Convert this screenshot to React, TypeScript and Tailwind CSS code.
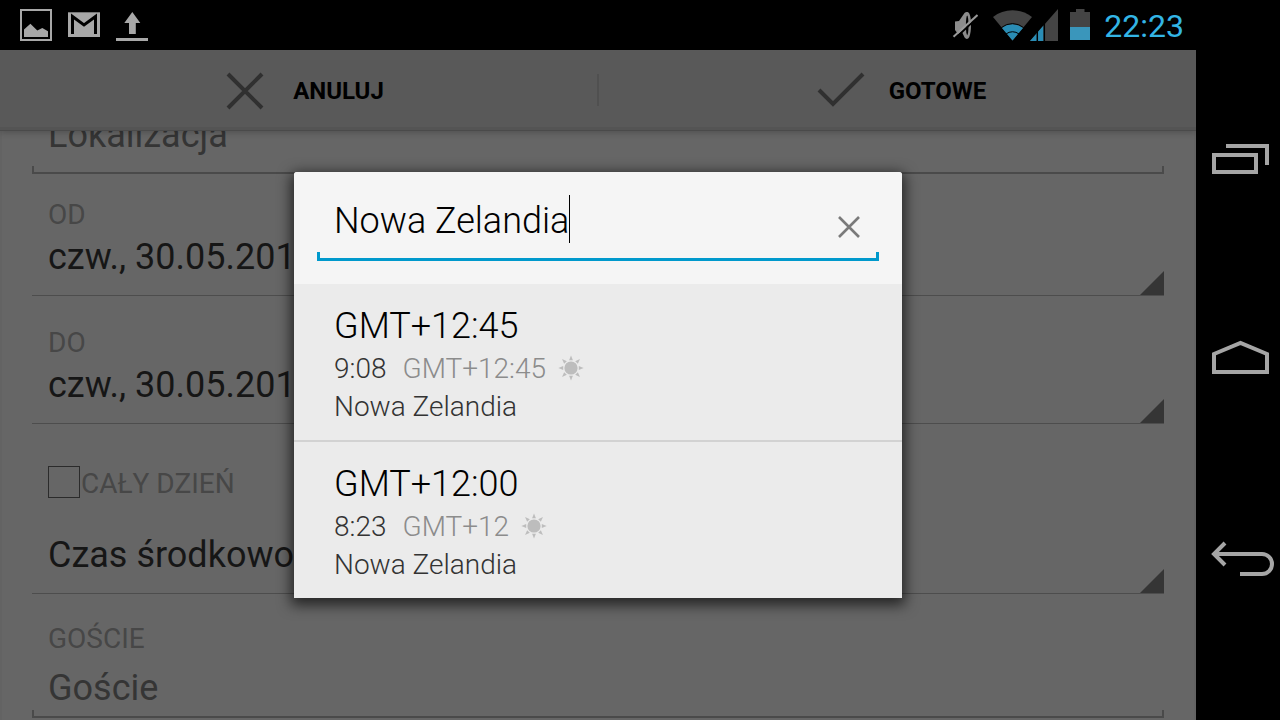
import { useState } from "react";
import type { ReactNode } from "react";

function ImageIcon() {
  return (
    <svg width="32" height="32" viewBox="0 0 32 32" fill="none" aria-hidden="true">
      <rect x="1" y="1" width="30" height="30" stroke="#a8a8a8" strokeWidth="2" />
      <path d="M4 28V20.5L10.4 14.7L17.3 21.5L22.3 19L28 22.3V28Z" fill="#a8a8a8" />
    </svg>
  );
}

function MailIcon() {
  return (
    <svg width="32" height="32" viewBox="0 0 32 32" fill="none" aria-hidden="true">
      <rect x="0" y="3.3" width="32" height="24.7" fill="#a8a8a8" />
      <path d="M4.5 25V7.5L16 16L27.5 7.5V25" stroke="#000" strokeWidth="3" />
    </svg>
  );
}

function UploadIcon() {
  return (
    <svg width="32" height="32" viewBox="0 0 32 32" fill="#a8a8a8" aria-hidden="true">
      <path d="M16.3 3L24.3 14H19.8V25H13V14H8.3Z" />
      <rect x="0" y="29" width="32" height="3" />
    </svg>
  );
}

function MuteIcon() {
  return (
    <svg width="26" height="32" viewBox="0 0 26 32" fill="none" aria-hidden="true">
      <path d="M3 12.500L7 12L12.500 4C14 2.600 16 2.600 17.300 4.500C18.600 7 19 11 19 16S18.500 25 17.300 28C16 30.500 14 30.500 12.600 28.500L10 23L6 25L3 21Z" fill="#8c8c8c" />
      <ellipse cx="15.200" cy="16.400" rx="1.300" ry="9.800" fill="#000" />
      <path d="M3 29.500L26 8" stroke="#000" strokeWidth="2" />
      <path d="M1.500 27.800L25.500 6" stroke="#9a9a9a" strokeWidth="2" />
    </svg>
  );
}

function WifiIcon() {
  return (
    <svg width="40" height="32" viewBox="0 0 40 32" aria-hidden="true">
      <path d="M20.5 31.500L1 8A32 32 0 0 1 40 8Z" fill="#444" />
      <path d="M20.5 31.500L10 19A17 17 0 0 1 31 19Z" fill="#2a8db5" />
      <path d="M9.500 18.500A17.500 17.500 0 0 1 31.500 18.500M14 25A10.500 10.500 0 0 1 27 25" fill="none" stroke="#000" strokeWidth="1" />
    </svg>
  );
}

function SignalIcon() {
  return (
    <svg width="28" height="32" viewBox="0 0 28 32" aria-hidden="true">
      <path d="M28 0V32H0Z" fill="#444" />
      <path d="M13.500 16.500V32H0Z" fill="#2a8db5" />
      <path d="M7.300 20V32M14.300 12V32" stroke="#000" strokeWidth="1.500" />
    </svg>
  );
}

function BatteryIcon() {
  return (
    <svg width="20" height="32" viewBox="0 0 20 32" aria-hidden="true">
      <path d="M6 0H14.500V3H20V18H0V3H6Z" fill="#444" />
      <rect y="18" width="20" height="13" fill="#3a96bb" />
    </svg>
  );
}

function SunIcon() {
  return (
    <svg width="26" height="28" viewBox="0 0 26 28" fill="#bdbdbd" aria-hidden="true">
      <circle cx="13" cy="13" r="6.6" />
      {[0, 45, 90, 135, 180, 225, 270, 315].map((a) => (
        <path key={a} d="M13 0.4L14.900 5.200H11.100Z" transform={`rotate(${a} 13 13)`} />
      ))}
    </svg>
  );
}

function Bracket() {
  return <div className="h-2 border-x-2 border-b-2 border-[#4a4a4a]" />;
}

function FieldLabel({ htmlFor, children }: { htmlFor: string; children: ReactNode }) {
  return (
    <label htmlFor={htmlFor} className="block px-4 text-[28px] leading-[34px] text-[#474747]">
      {children}
    </label>
  );
}

function Spinner({ id, label, children }: { id: string; label?: string; children: ReactNode }) {
  return (
    <button id={id} type="button" aria-label={label} className="flex h-[60px] w-full justify-between border-b border-[#4d4d4d] pl-4 text-left text-[36px] leading-[42px] text-[#161616]">
      <span className="truncate">{children}</span>
      <svg width="24" height="24" viewBox="0 0 24 24" className="shrink-0 self-end" aria-hidden="true">
        <path d="M24 0V24H0Z" fill="#353535" />
      </svg>
    </button>
  );
}

function ActionButton({ label, children }: { label: string; children: ReactNode }) {
  return (
    <button type="button" className="flex flex-1 items-center justify-center gap-4 pt-px text-2xl font-bold text-black">
      <svg width="64" height="64" viewBox="0 0 64 64" fill="none" stroke="#303030" strokeWidth="4" aria-hidden="true">
        {children}
      </svg>
      {label}
    </button>
  );
}

function NavButton({ label, children }: { label: string; children: ReactNode }) {
  return (
    <button type="button" aria-label={label} className="flex flex-1 items-center justify-center">
      <svg width="76" height="40" viewBox="0 0 76 40" fill="none" stroke="#a5a5a5" strokeWidth="4" aria-hidden="true">
        {children}
      </svg>
    </button>
  );
}

const zones = [
  { title: "GMT+12:45", time: "9:08", offset: "GMT+12:45", place: "Nowa Zelandia" },
  { title: "GMT+12:00", time: "8:23", offset: "GMT+12", place: "Nowa Zelandia" },
];

function ZoneDialog() {
  const [query, setQuery] = useState("Nowa Zelandia");
  return (
    <div role="dialog" aria-label="Strefa czasowa" className="w-[608px] max-w-full overflow-hidden rounded-t-[3px] bg-[#ebebeb] font-light shadow-[0_4px_14px_3px_rgba(0,0,0,0.65)]">
      <div className="bg-[#f5f5f5] px-[23px] pt-[23px] pb-[23px]">
        <div className="flex h-[50px] items-end pr-3 pl-[17px]">
          <input
            aria-label="Szukaj"
            value={query}
            onChange={(e) => setQuery(e.target.value)}
            className="h-12 min-w-0 [field-sizing:content] bg-transparent text-[36px] leading-[42px] text-black caret-transparent outline-none"
          />
          <span className="h-12 w-px self-start bg-black" />
          <button type="button" aria-label="Wyczyść" onClick={() => setQuery("")} className="ml-auto flex size-9 items-center justify-center">
            <svg width="22" height="22" viewBox="0 0 22 22" fill="none" stroke="#7a7a7a" strokeWidth="2.6" aria-hidden="true">
              <path d="M1 1L21 21M21 1L1 21" />
            </svg>
          </button>
        </div>
        <div className="mt-[7px] h-[9px] border-x-[3px] border-b-[3px] border-[#0099cc]" />
      </div>
      <ul className="divide-y-2 divide-[#d2d2d2]">
        {zones.map((z) => (
          <li key={z.title}>
            <button type="button" className="block w-full px-10 pt-5 pb-[14px] text-left text-[28px] leading-[38px] text-[#333]">
              <span className="mb-0.5 block text-[36px] leading-[44px] text-black">{z.title}</span>
              <span className="flex items-center">
                <span>{z.time}</span>
                <span className="mr-3 ml-4 text-[#8c8c8c]">{z.offset}</span>
                <SunIcon />
              </span>
              <span className="block">{z.place}</span>
            </button>
          </li>
        ))}
      </ul>
    </div>
  );
}

export default function App() {
  return (
    <div className="flex h-screen overflow-hidden bg-black font-['Roboto',sans-serif]">
      <div className="flex min-w-0 flex-1 flex-col">
        <header className="flex h-[50px] shrink-0 items-center justify-between pr-3 pl-5">
          <div className="flex gap-4">
            <ImageIcon />
            <MailIcon />
            <UploadIcon />
          </div>
          <div className="flex items-center">
            <MuteIcon />
            <span className="ml-[14px] flex">
              <WifiIcon />
              <span className="-ml-0.5">
                <SignalIcon />
              </span>
            </span>
            <span className="ml-3">
              <BatteryIcon />
            </span>
            <time className="ml-[14px] pt-0.5 text-[32px] leading-10 text-[#33b5e5]">22:23</time>
          </div>
        </header>

        <main className="relative flex min-h-0 flex-1 flex-col bg-[#666]">
          <div className="z-10 flex h-20 shrink-0 items-center bg-[#595959] shadow-[inset_0_-3px_0_0_#545454,0_1px_0_0_#4a4a4a,0_3px_6px_0_rgba(0,0,0,0.2)]">
            <ActionButton label="ANULUJ">
              <path d="M15 15L49 49M49 15L15 49" />
            </ActionButton>
            <div className="h-8 w-0.5 bg-[#505050]" />
            <ActionButton label="GOTOWE">
              <path d="M10 31L24 45L54 15" />
            </ActionButton>
          </div>

          <form className="min-h-0 flex-1 overflow-hidden border-x-2 border-[#636363] px-[30px]">
            <div className="-mt-[17px]">
              <input aria-label="Lokalizacja" placeholder="Lokalizacja" className="mb-[9px] block h-11 w-full bg-transparent px-4 text-[36px] leading-[42px] outline-none placeholder:text-[#353535]" />
              <Bracket />
            </div>
            <div className="flex flex-col gap-1 pt-6">
              <FieldLabel htmlFor="start">OD</FieldLabel>
              <Spinner id="start">czw., 30.05.2013</Spinner>
            </div>
            <div className="flex flex-col gap-1 pt-[30px]">
              <FieldLabel htmlFor="end">DO</FieldLabel>
              <Spinner id="end">czw., 30.05.2013</Spinner>
            </div>
            <div className="mt-[42px] flex h-8 items-start gap-px pl-4">
              <input id="all-day" type="checkbox" className="size-8 shrink-0 appearance-none border border-[#2b2b2b] checked:bg-[#2b2b2b]" />
              <label htmlFor="all-day" className="text-[28px] leading-9 text-[#474747]">
                CAŁY DZIEŃ
              </label>
            </div>
            <div className="pt-9">
              <Spinner id="zone">Czas środkowo</Spinner>
            </div>
            <div className="pt-7">
              <FieldLabel htmlFor="guests">GOŚCIE</FieldLabel>
              <input id="guests" placeholder="Goście" className="mt-2.5 block h-11 w-full bg-transparent px-4 text-[36px] leading-[42px] outline-none placeholder:text-[#353535]" />
              <Bracket />
            </div>
          </form>

          <div className="absolute inset-0 z-20 flex items-center justify-center">
            <ZoneDialog />
          </div>
        </main>
      </div>

      <nav className="flex w-21 shrink-0 flex-col py-[60px]">
        <NavButton label="Ostatnie aplikacje">
          <path d="M14 15H56V32H14Z" />
          <path d="M26 6H67V25" />
        </NavButton>
        <NavButton label="Ekran główny">
          <path d="M14 32V14L40.500 3L67 14V32Z" />
        </NavButton>
        <NavButton label="Wstecz">
          <path d="M25 3L14 14L25 25M14 14H62A10 10 0 0 1 62 34H40" />
        </NavButton>
      </nav>
    </div>
  );
}
